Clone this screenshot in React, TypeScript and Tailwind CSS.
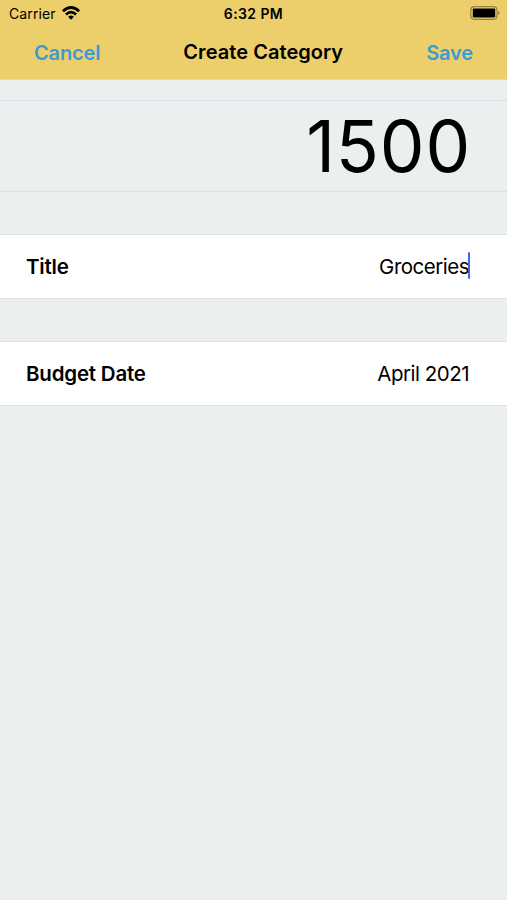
import React, { useState } from "react";

interface RowProps {
    label: string,
    value: string,
    editing?: boolean,
};

const StatusBar = () => (
    <div className="grid h-7 grid-cols-3 items-center pl-[9px] pr-[6px] text-[14px] leading-none">
        <div className="flex items-center gap-[6px]">
            <span className="tracking-[0.1px]">Carrier</span>
            <svg className="-mt-[2px]" width="18" height="14" viewBox="0 0 18 14" fill="none" stroke="black" strokeWidth="2.7">
                <path d="M0.9 5.2 Q9 -2.2 17.1 5.2" />
                <path d="M3.9 8.5 Q9 3.9 14.1 8.5" />
                <path d="M9 13.8 L6.1 10.7 Q9 8.3 11.9 10.7 Z" fill="black" stroke="none" />
            </svg>
        </div>
        <span className="-ml-[3px] text-center font-semibold tracking-[0.4px]">6:32 PM</span>
        <svg className="-mt-[2px] justify-self-end" width="31" height="14" viewBox="0 0 31 14">
            <rect x="0.8" y="0.7" width="26.2" height="12.6" rx="3.5" fill="none" stroke="#96803f" strokeWidth="1.2" />
            <rect x="2.8" y="2.5" width="22.4" height="9" rx="1.2" />
            <path d="M28.2 4.8 Q31 7 28.2 9.2 Z" fill="#96803f" />
        </svg>
    </div>
);

const Row = ({ label, value, editing }: RowProps) => (
    <div className="flex h-[65px] items-center justify-between border-y border-[#dfe3e4] bg-white pl-[26px] pr-[38px] pt-px text-[20.5px]">
        <span className="font-semibold tracking-[-0.2px]">{label}</span>
        <span className="relative tracking-[-0.5px]">
            {value}
            {editing && <span className="absolute -right-[1px] top-0 h-[27px] w-[2.5px] rounded-full bg-[#4169e1]" />}
        </span>
    </div>
);

const App = () => {

    const [title] = useState<string>("Groceries");
    const [amount] = useState<number>(1500);

    return (
        <div className="flex min-h-screen flex-col bg-[#ebeff0] font-['Inter',sans-serif] text-black">

            {/* Header */}
            <header className="h-20 border-b border-[#e2d8b4] bg-[#ecce6b]">
                <StatusBar />
                <nav className="flex h-12 items-center justify-between px-[34px] text-[20px] font-semibold">
                    <button className="pt-[2px] tracking-[-0.15px] text-[#3a9bd5]">Cancel</button>
                    <h1 className="tracking-[0.05px]">Create Category</h1>
                    <button className="pt-[2px] tracking-[-0.15px] text-[#3a9bd5]">Save</button>
                </nav>
            </header>

            {/* Form */}
            <main className="mt-5 flex flex-col">
                <div className="flex h-[92px] items-center justify-end border-y border-[#dce0e2] pr-[36px] text-[71px] leading-none tracking-[0.8px]">
                    {amount}
                </div>
                <section className="mt-[42px] flex flex-col gap-[42px]">
                    <Row label="Title" value={title} editing />
                    <Row label="Budget Date" value="April 2021" />
                </section>
            </main>

        </div>
    );
};

export default App;
